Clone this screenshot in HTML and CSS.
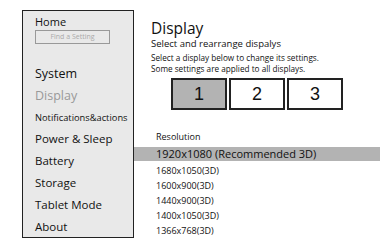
FILE: index.html
```html
<!DOCTYPE html>
<html lang="en">
   <head>
      <meta charset="UTF-8">
      <title>Display Settings</title>
      <link rel="stylesheet" href="styles.css">
   </head>
   <body>
      <div class="page">
         <div class="sidebar">
            <div class="home">Home</div>
            <div class="search">Find a Setting</div>
            <div class="item system">System</div>
            <div class="item current">Display</div>
            <div class="item small">Notifications&amp;actions</div>
            <div class="item">Power &amp; Sleep</div>
            <div class="item">Battery</div>
            <div class="item">Storage</div>
            <div class="item">Tablet Mode</div>
            <div class="item">About</div>
         </div>
         <div class="main">
            <h1 class="title">Display</h1>
            <div class="subtitle">Select and rearrange dispalys</div>
            <div class="note">Select a display below to change its settings.<br>Some settings are applied to all displays.</div>
            <div class="screens">
               <div class="screen selected">1</div>
               <div class="screen">2</div>
               <div class="screen">3</div>
            </div>
            <div class="res-label">Resolution</div>
            <div class="res-list">
               <div class="res active">1920x1080 (Recommended 3D)</div>
               <div class="res">1680x1050(3D)</div>
               <div class="res">1600x900(3D)</div>
               <div class="res">1440x900(3D)</div>
               <div class="res">1400x1050(3D)</div>
               <div class="res">1366x768(3D)</div>
            </div>
         </div>
      </div>
   </body>
</html>
```
FILE: styles.css
```css
body{
margin: 0;
background: #fff;
font-family: "Open Sans", "Noto Sans", sans-serif;
color: #111;
}
.page{
display: flex;
padding: 10px 0 0 22px;
}
.sidebar{
width: 112px;
height: 228px;
border: 1px solid #222;
background: #e9e9e9;
padding: 4px 0 0 12px;
box-sizing: border-box;
}
.home{
font-size: 11px;
line-height: 13px;
}
.search{
width: 73px;
height: 12px;
border: 1px solid #999;
font-size: 7px;
line-height: 12px;
color: #aaa;
text-align: center;
margin-top: 2px;
margin-bottom: 20px;
}
.item{
font-size: 11.5px;
line-height: 21.8px;
height: 21.8px;
}
.system{
font-size: 12.5px;
margin-top: -1px;
}
.current{
color: #999;
font-size: 12.5px;
}
.small{
font-size: 9.3px;
}
.main{
flex: 1;
padding: 9px 0 0 0;
}
.title{
font-size: 15.5px;
font-weight: normal;
margin: 0 0 0 17px;
line-height: 18px;
}
.subtitle{
font-size: 9.5px;
margin-left: 17px;
line-height: 13px;
}
.note{
font-size: 8.2px;
line-height: 11px;
margin: 2px 0 0 17px;
}
.screens{
display: flex;
gap: 2px;
margin: 4px 0 0 37px;
}
.screen{
width: 52px;
height: 28px;
border: 2px solid #222;
background: #fff;
font-family: "Liberation Sans", Arial, sans-serif;
font-size: 18px;
line-height: 28px;
text-align: center;
}
.screen.selected{
background: #b3b3b3;
}
.res-label{
font-size: 9px;
margin: 21px 0 0 22px;
line-height: 12px;
}
.res-list{
margin-top: 4px;
width: 246px;
}
.res{
font-size: 9px;
line-height: 15px;
padding-left: 22px;
}
.res.active{
background: #b3b3b3;
font-size: 11px;
line-height: 14px;
margin-bottom: 2px;
}
```
